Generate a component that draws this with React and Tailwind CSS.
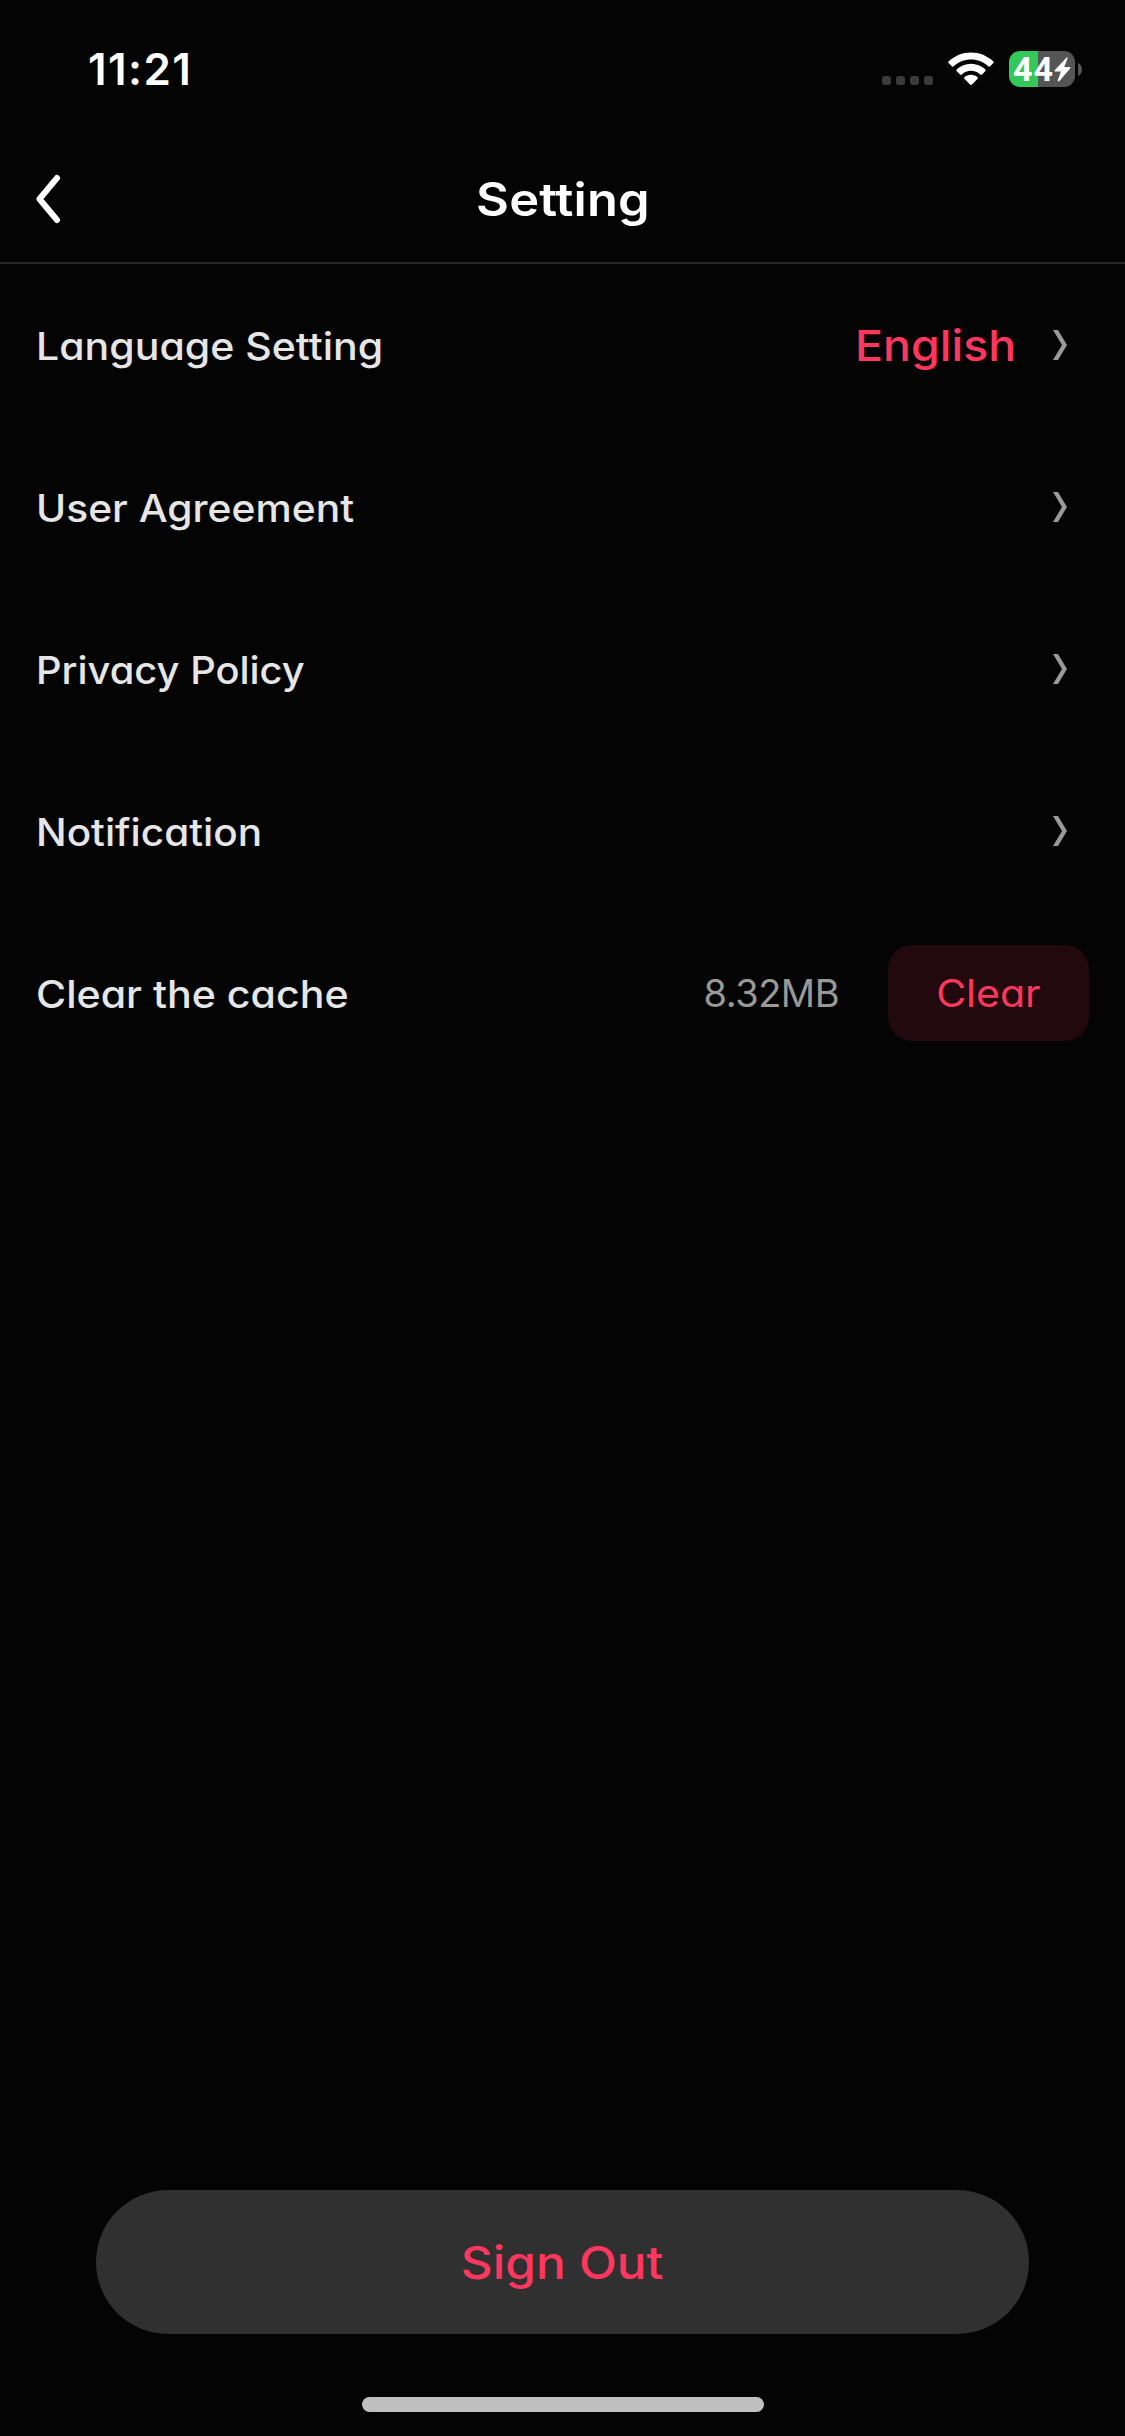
import React from "react";

function StatusBar() {
  return (
    <div className="flex h-[138px] items-center justify-between pr-[43px] pl-[88px]">
      <span className="text-[44px] leading-none font-semibold tracking-[1.4px] text-white">11:21</span>
      <div className="flex items-center">
        <div className="mt-[23px] flex gap-[5px]">
          {[0, 1, 2, 3].map((i) => (
            <span key={i} className="size-[9px] rounded-[3px] bg-[#3b3b3b]" />
          ))}
        </div>
        <svg className="ml-[15px]" width="46" height="34" viewBox="0 0 46 34">
          <g fill="#fff">
            <path d="M23 0.5C14.4 0.5 6.6 3.9 0.8 9.3Q-0.2 10.3 0.8 11.3L3.8 14.3Q4.7 15.2 5.7 14.3C10.2 10.1 16.3 7.6 23 7.6S35.8 10.1 40.3 14.3Q41.3 15.2 42.2 14.3L45.2 11.3Q46.2 10.3 45.2 9.3C39.4 3.9 31.6 0.5 23 0.5Z" />
            <path d="M23 11.7C17.5 11.7 12.5 13.9 8.8 17.3Q7.8 18.3 8.8 19.3L12 22.4Q12.9 23.2 13.9 22.4C16.3 20.2 19.5 18.8 23 18.8S29.7 20.2 32.1 22.4Q33.1 23.2 34 22.4L37.2 19.3Q38.2 18.3 37.2 17.3C33.5 13.9 28.5 11.7 23 11.7Z" />
            <path d="M23 22.8C20.5 22.8 18.3 23.7 16.6 25.1Q15.6 26.1 16.6 27.1L22 32.5Q23 33.4 24 32.5L29.4 27.1Q30.4 26.1 29.4 25.1C27.7 23.7 25.5 22.8 23 22.8Z" />
          </g>
        </svg>
        <div className="ml-[15px] flex h-9 w-[66px] items-center justify-center rounded-[11px] bg-[linear-gradient(to_right,#34c759_29px,#555555_29px)]">
          <span className="font-['Roboto',sans-serif] text-[34px] leading-9 font-bold tracking-[1px] text-white">44</span>
          <svg width="17" height="25" viewBox="0 0 17 25">
            <path d="M12.6 0.4 L0.7 13.2 Q0 14.4 1.3 14.6 L6.9 14.6 L3.7 23.6 Q3.8 25 5 24.4 L16.4 11.2 Q16.9 10.1 15.7 9.9 L10.2 9.9 L13.7 1 Q13.6 0 12.6 0.4Z" fill="#fff" />
          </svg>
        </div>
        <svg className="ml-[3px]" width="4" height="13" viewBox="0 0 4 13">
          <path d="M0 0C2.5 1 4 3.4 4 6.5S2.5 12 0 13Z" fill="#555" />
        </svg>
      </div>
    </div>
  );
}

function Header() {
  return (
    <header className="grid h-[126px] grid-cols-[1fr_auto_1fr] items-center border-b-2 border-[#282828] pb-[3px]">
      <button className="ml-[35px] w-[26px]" aria-label="Back">
        <svg width="26" height="50" viewBox="0 0 26 50">
          <path d="M22 4 L4.5 25 L22 46" fill="none" stroke="#fff" strokeWidth="6" strokeLinecap="round" strokeLinejoin="round" />
        </svg>
      </button>
      <h1 className="scale-x-[1.1] text-[46px] leading-none font-semibold tracking-[0.1px] text-white">Setting</h1>
    </header>
  );
}

function Chevron() {
  return (
    <svg width="14" height="30" viewBox="0 0 14 30">
      <path d="M0 0H5L14 15L5 30H0L9 15Z" fill="#9a9a9a" />
    </svg>
  );
}

function Row({ label, stretch, children }) {
  return (
    <div className="flex h-[162px] items-center justify-between pr-9 pl-9">
      <span className={`origin-left pt-px text-[38px] leading-none font-[480] text-[#e6e6e6] ${stretch}`}>{label}</span>
      <div className="flex items-center">{children}</div>
    </div>
  );
}

const links = [
  { label: "Language Setting", stretch: "scale-x-[1.08]", value: "English" },
  { label: "User Agreement", stretch: "scale-x-[1.073]" },
  { label: "Privacy Policy", stretch: "scale-x-[1.049]" },
  { label: "Notification", stretch: "scale-x-[1.066]" },
];

export default function App() {
  return (
    <div className="flex h-[2436px] w-[1125px] flex-col bg-[#040404] font-['Inter','Liberation_Sans',sans-serif] [font-feature-settings:'cv11']">
      <StatusBar />
      <Header />
      <main className="flex-1">
        {links.map(({ label, stretch, value }) => (
          <Row key={label} label={label} stretch={stretch}>
            {value && <span className="mr-[37px] origin-right scale-x-[1.08] text-[43px] leading-none font-[480] text-[#ff375f]">{value}</span>}
            <span className="mr-[22px]">
              <Chevron />
            </span>
          </Row>
        ))}
        <Row label="Clear the cache" stretch="scale-x-[1.082]">
          <span className="mr-[49px] text-[38px] leading-none tracking-[-0.5px] text-[#999999]">8.32MB</span>
          <button className="flex h-24 w-[201px] items-center justify-center rounded-[24px] bg-[#21090d] pr-px text-[38px] leading-none text-[#ff375f]">
            <span className="scale-x-[1.08]">Clear</span>
          </button>
        </Row>
      </main>
      <button className="mx-auto flex h-36 w-[933px] items-center justify-center rounded-full bg-[#303030] pr-px text-[45px] leading-none font-[480] text-[#ff375f]">
        <span className="scale-x-[1.1]">Sign Out</span>
      </button>
      <div className="mx-auto mt-[63px] mb-6 h-[15px] w-[402px] rounded-full bg-[#c0c0c0]" />
    </div>
  );
}
